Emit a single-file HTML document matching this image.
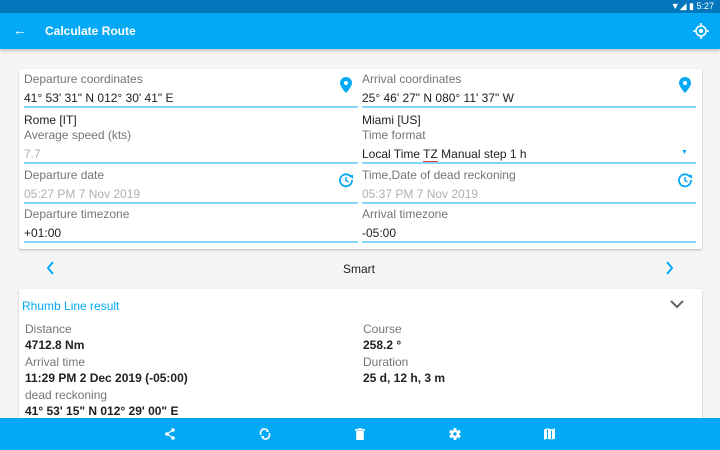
<!DOCTYPE html>
<html><head><style>
*{margin:0;padding:0;box-sizing:border-box}
body{width:720px;height:450px;overflow:hidden;background:#f5f5f5;font-family:"Liberation Sans",sans-serif;position:relative}
.a{position:absolute;white-space:nowrap}
.l{font-size:12px;color:#757575}
.v{font-size:12px;color:#212121}
.g{font-size:12px;color:#b0b0b0}
.b{font-size:12px;color:#212121;font-weight:bold}
.u{position:absolute;height:1.5px;background:#81d4fa}
</style></head><body>
<div class="a" style="left:0;top:0;width:720px;height:13px;background:#0277bd"></div>
<div class="a" style="right:6px;top:1px;font-size:9px;color:#fff">▼◢ ▮ 5:27</div>
<div class="a" style="left:0;top:13px;width:720px;height:36px;background:#03a9f4;box-shadow:0 2px 3px rgba(0,0,0,.2)"></div>
<div class="a" style="left:13px;top:22px;font-size:14px;color:#fff">←</div>
<div class="a" style="left:45px;top:24px;font-size:12px;font-weight:bold;color:#fff">Calculate Route</div>
<svg class="a" style="left:693px;top:23px" width="16" height="16" viewBox="0 0 16 16"><circle cx="8" cy="8" r="5" fill="none" stroke="#fff" stroke-width="1.6"/><circle cx="8" cy="8" r="2.2" fill="#fff"/><path d="M8 0v3M8 13v3M0 8h3M13 8h3" stroke="#fff" stroke-width="1.6"/></svg>

<div class="a" style="left:19px;top:69px;width:683px;height:180px;background:#fff;box-shadow:0 1px 2px rgba(0,0,0,.25);border-radius:2px"></div>
<div class="a l" style="left:24px;top:72px">Departure coordinates</div>
<div class="a v" style="left:24px;top:91px">41° 53' 31" N 012° 30' 41" E</div>
<div class="u" style="left:24px;top:106px;width:334px"></div>
<div class="a l" style="left:362px;top:72px">Arrival coordinates</div>
<div class="a v" style="left:362px;top:91px">25° 46' 27" N 080° 11' 37" W</div>
<div class="u" style="left:362px;top:106px;width:334px"></div>
<svg class="a" style="left:340px;top:77px" width="12" height="16" viewBox="0 0 12 16"><path d="M6 0C2.7 0 0 2.6 0 5.9 0 10 6 16 6 16s6-6 6-10.1C12 2.6 9.3 0 6 0z" fill="#03a9f4"/><circle cx="6" cy="6" r="2" fill="#fff"/></svg>
<svg class="a" style="left:679px;top:77px" width="12" height="16" viewBox="0 0 12 16"><path d="M6 0C2.7 0 0 2.6 0 5.9 0 10 6 16 6 16s6-6 6-10.1C12 2.6 9.3 0 6 0z" fill="#03a9f4"/><circle cx="6" cy="6" r="2" fill="#fff"/></svg>

<div class="a v" style="left:24px;top:113px">Rome [IT]</div>
<div class="a l" style="left:24px;top:128px">Average speed (kts)</div>
<div class="a g" style="left:24px;top:147px">7.7</div>
<div class="u" style="left:24px;top:162px;width:334px"></div>
<div class="a v" style="left:362px;top:113px">Miami [US]</div>
<div class="a l" style="left:362px;top:128px">Time format</div>
<div class="a v" style="left:362px;top:147px">Local Time <span style="border-bottom:1.5px solid #e53935">TZ</span> Manual step 1 h</div>
<div class="a" style="left:681px;top:149px;font-size:7px;color:#03a9f4">▼</div>
<div class="u" style="left:362px;top:162px;width:334px"></div>

<div class="a l" style="left:24px;top:168px">Departure date</div>
<div class="a g" style="left:24px;top:187px">05:27 PM 7 Nov 2019</div>
<div class="u" style="left:24px;top:202px;width:334px"></div>
<div class="a l" style="left:362px;top:168px">Time,Date of dead reckoning</div>
<div class="a g" style="left:362px;top:187px">05:37 PM 7 Nov 2019</div>
<div class="u" style="left:362px;top:202px;width:334px"></div>
<svg class="a" style="left:338px;top:172px" width="16" height="16" viewBox="0 0 16 16"><path d="M13 5A6 6 0 1 0 14 8" fill="none" stroke="#03a9f4" stroke-width="1.8"/><path d="M11 3h4v4z" fill="#03a9f4"/><path d="M8 5v3.5l2.5 1.5" fill="none" stroke="#03a9f4" stroke-width="1.5"/></svg>
<svg class="a" style="left:677px;top:172px" width="16" height="16" viewBox="0 0 16 16"><path d="M13 5A6 6 0 1 0 14 8" fill="none" stroke="#03a9f4" stroke-width="1.8"/><path d="M11 3h4v4z" fill="#03a9f4"/><path d="M8 5v3.5l2.5 1.5" fill="none" stroke="#03a9f4" stroke-width="1.5"/></svg>

<div class="a l" style="left:24px;top:207px">Departure timezone</div>
<div class="a v" style="left:24px;top:226px">+01:00</div>
<div class="u" style="left:24px;top:241px;width:334px"></div>
<div class="a l" style="left:362px;top:207px">Arrival timezone</div>
<div class="a v" style="left:362px;top:226px">-05:00</div>
<div class="u" style="left:362px;top:241px;width:334px"></div>

<svg class="a" style="left:46px;top:261px" width="10" height="14" viewBox="0 0 10 14"><path d="M7 1L2 7l5 6" fill="none" stroke="#03a9f4" stroke-width="2"/></svg>
<div class="a v" style="left:343px;top:262px">Smart</div>
<svg class="a" style="left:664px;top:261px" width="10" height="14" viewBox="0 0 10 14"><path d="M3 1l5 6-5 6" fill="none" stroke="#03a9f4" stroke-width="2"/></svg>

<div class="a" style="left:19px;top:289px;width:683px;height:140px;background:#fff;box-shadow:0 1px 2px rgba(0,0,0,.25)"></div>
<div class="a" style="left:22px;top:299px;font-size:12px;color:#03a9f4">Rhumb Line result</div>
<svg class="a" style="left:670px;top:299px" width="14" height="10" viewBox="0 0 14 10"><path d="M1 2l6 6 6-6" fill="none" stroke="#616161" stroke-width="2"/></svg>
<div class="a l" style="left:25px;top:322px">Distance</div>
<div class="a b" style="left:25px;top:338px">4712.8 Nm</div>
<div class="a l" style="left:25px;top:355px">Arrival time</div>
<div class="a b" style="left:25px;top:371px">11:29 PM 2 Dec 2019 (-05:00)</div>
<div class="a l" style="left:25px;top:388px">dead reckoning</div>
<div class="a b" style="left:25px;top:404px">41° 53' 15" N 012° 29' 00" E</div>
<div class="a l" style="left:363px;top:322px">Course</div>
<div class="a b" style="left:363px;top:338px">258.2 °</div>
<div class="a l" style="left:363px;top:355px">Duration</div>
<div class="a b" style="left:363px;top:371px">25 d, 12 h, 3 m</div>

<div class="a" style="left:0;top:418px;width:720px;height:32px;background:#03a9f4"></div>
<svg class="a" style="left:164px;top:428px" width="12" height="12" viewBox="0 0 12 12"><circle cx="9" cy="2" r="1.8" fill="#fff"/><circle cx="3" cy="6" r="1.8" fill="#fff"/><circle cx="9" cy="10" r="1.8" fill="#fff"/><path d="M9 2L3 6l6 4" fill="none" stroke="#fff" stroke-width="1.2"/></svg>
<svg class="a" style="left:259px;top:428px" width="12" height="12" viewBox="0 0 12 12"><path d="M2 7A4 4 0 0 1 9 3M10 5A4 4 0 0 1 3 9" fill="none" stroke="#fff" stroke-width="1.6"/><path d="M8 1l2 3-3 0z M4 11l-2-3 3 0z" fill="#fff"/></svg>
<svg class="a" style="left:355px;top:428px" width="10" height="12" viewBox="0 0 10 12"><rect x="0" y="1" width="10" height="1.6" fill="#fff"/><rect x="3.5" y="0" width="3" height="1.5" fill="#fff"/><rect x="1.2" y="3" width="7.6" height="9" fill="#fff"/></svg>
<svg class="a" style="left:449px;top:428px" width="12" height="12" viewBox="0 0 12 12"><g fill="#fff"><rect x="4.6" y="0" width="2.8" height="12"/><rect x="4.6" y="0" width="2.8" height="12" transform="rotate(60 6 6)"/><rect x="4.6" y="0" width="2.8" height="12" transform="rotate(120 6 6)"/><circle cx="6" cy="6" r="4.3"/></g><circle cx="6" cy="6" r="1.7" fill="#03a9f4"/></svg>
<svg class="a" style="left:544px;top:428px" width="11" height="12" viewBox="0 0 11 12"><path d="M0 1.5l3.5-1.2 4 1.2 3.5-1.2v10.2l-3.5 1.2-4-1.2L0 11.7z" fill="#fff"/><path d="M3.5 1.5v8.7M7.5 2.7v8.7" stroke="#03a9f4" stroke-width="1"/></svg>
</body></html>
